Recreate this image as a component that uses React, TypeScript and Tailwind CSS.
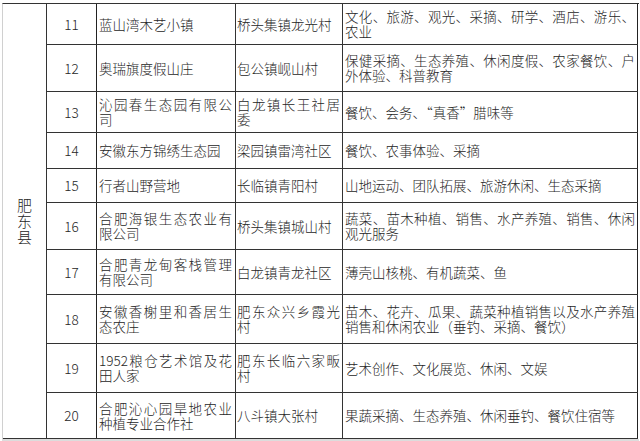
import React from "react";

interface Row {
  no: number;
  h: string;
  name: string[];
  place: string[];
  items: string[];
}

const rows: Row[] = [
  { no: 11, h: "h-[41px]", name: ["蓝山湾木艺小镇"], place: ["桥头集镇龙光村"], items: ["文化、旅游、观光、采摘、研学、酒店、游乐、", "农业"] },
  { no: 12, h: "h-[47px]", name: ["奥瑞旗度假山庄"], place: ["包公镇岘山村"], items: ["保健采摘、生态养殖、休闲度假、农家餐饮、户", "外体验、科普教育"] },
  { no: 13, h: "h-[41px]", name: ["沁园春生态园有限公", "司"], place: ["白龙镇长王社居", "委"], items: ["餐饮、会务、“真香”腊味等"] },
  { no: 14, h: "h-[36px]", name: ["安徽东方锦绣生态园"], place: ["梁园镇雷湾社区"], items: ["餐饮、农事体验、采摘"] },
  { no: 15, h: "h-[34px]", name: ["行者山野营地"], place: ["长临镇青阳村"], items: ["山地运动、团队拓展、旅游休闲、生态采摘"] },
  { no: 16, h: "h-[47px]", name: ["合肥海银生态农业有", "限公司"], place: ["桥头集镇城山村"], items: ["蔬菜、苗木种植、销售、水产养殖、销售、休闲", "观光服务"] },
  { no: 17, h: "h-[45px]", name: ["合肥青龙甸客栈管理", "有限公司"], place: ["白龙镇青龙社区"], items: ["薄壳山核桃、有机蔬菜、鱼"] },
  { no: 18, h: "h-[49px]", name: ["安徽香榭里和香居生", "态农庄"], place: ["肥东众兴乡霞光", "村"], items: ["苗木、花卉、瓜果、蔬菜种植销售以及水产养殖", "销售和休闲农业（垂钓、采摘、餐饮）"] },
  { no: 19, h: "h-[49px]", name: ["1952粮仓艺术馆及花", "田人家"], place: ["肥东长临六家畈", "村"], items: ["艺术创作、文化展览、休闲、文娱"] },
  { no: 20, h: "h-[46px]", name: ["合肥沁心园旱地农业", "种植专业合作社"], place: ["八斗镇大张村"], items: ["果蔬采摘、生态养殖、休闲垂钓、餐饮住宿等"] },
];

// wrapped lines are spread edge to edge like the sheet does
const Lines = ({ lines }: { lines: string[] }) => (
  <>
    {lines.map((l, i) =>
      i < lines.length - 1 ? (
        <div key={i} className="text-justify [text-align-last:justify] whitespace-nowrap">
          {l}
        </div>
      ) : (
        <div key={i} className="whitespace-nowrap">{l}</div>
      )
    )}
  </>
);

export default function App() {
  return (
    <div
      className="w-[640px] h-[441px] bg-white overflow-hidden text-[13.5px] leading-[15px] font-light text-[#262626]"
      style={{ fontFamily: '"Noto Sans CJK SC", "Noto Sans", sans-serif' }}
    >
      <div className="ml-[2px] mt-[3px] w-[637px] flex border-t border-l border-t-[#333] border-l-[#d0d0d0]">
        {/* merged county cell */}
        <div className="w-[44px] shrink-0 flex flex-col items-center justify-center border-r border-b border-[#333] text-[15px] leading-[16px]">
          <span>肥</span>
          <span>东</span>
          <span>县</span>
        </div>

        <div className="flex flex-col">
          {rows.map((r) => (
            <div key={r.no} className={`flex border-b border-[#333] ${r.h}`}>
              <div className="w-[50px] shrink-0 flex items-center justify-center border-r border-[#222]">
                {r.no}
              </div>
              <div className="w-[139px] shrink-0 flex flex-col justify-center pl-[2px] pr-[3px] border-r border-[#333]">
                <Lines lines={r.name} />
              </div>
              <div className="w-[107px] shrink-0 flex flex-col justify-center pl-[1px] pr-[2px] border-r border-[#333]">
                <Lines lines={r.place} />
              </div>
              <div className="w-[295px] shrink-0 flex flex-col justify-center pl-[2px] pr-[2px] border-r border-[#222]">
                <Lines lines={r.items} />
              </div>
            </div>
          ))}
        </div>
        <div className="w-[1px] shrink-0" />
      </div>
      <div className="ml-[2px] w-[637px] h-[2px] bg-[#dcdcdc]" />
    </div>
  );
}
